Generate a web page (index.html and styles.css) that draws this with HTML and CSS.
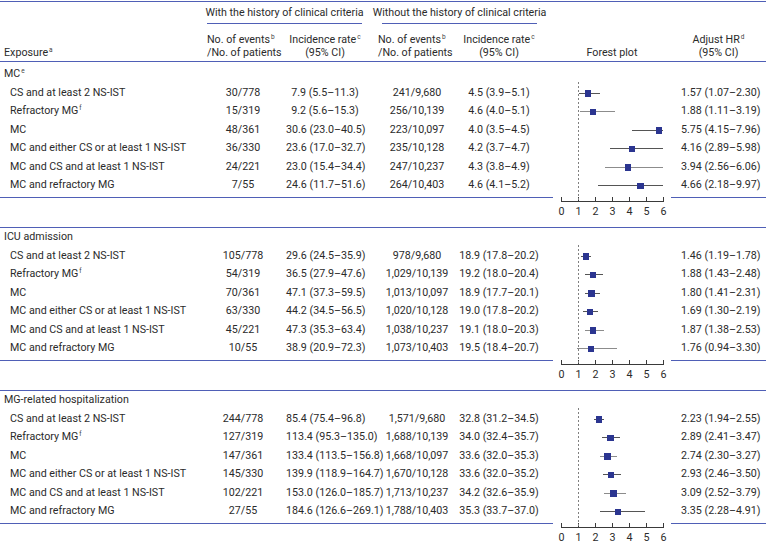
FILE: index.html
```html
<!DOCTYPE html>
<html lang="en">
<head>
<meta charset="utf-8">
<title>Forest plot table</title>
<link rel="stylesheet" href="styles.css">
</head>
<body>
<div class="table">
  <div class="grid hdr-groups">
    <div class="group g1"><span>With the history of clinical criteria</span></div>
    <div class="group g2"><span>Without the history of clinical criteria</span></div>
  </div>
  <div class="grid hdr-cols">
    <div class="c0 hexp">Exposure<sup>a</sup></div>
    <div class="c1 hleft">No. of events<sup>b</sup><br>/No. of patients</div>
    <div class="c2 hcen">Incidence rate<sup>c</sup><br>(95% CI)</div>
    <div class="c3 hleft">No. of events<sup>b</sup><br>/No. of patients</div>
    <div class="c4 hcen">Incidence rate<sup>c</sup><br>(95% CI)</div>
    <div class="c5 hcen">Forest plot</div>
    <div class="c6 hcen">Adjust HR<sup>d</sup><br>(95% CI)</div>
  </div>

  <section class="sec first">
    <div class="grid row"><div class="c0 title">MC<sup>e</sup></div></div>
    <div class="grid row"><div class="c0 lab">CS and at least 2 NS-IST</div><div class="c1">30/778</div><div class="c2">7.9 (5.5–11.3)</div><div class="c3">241/9,680</div><div class="c4">4.5 (3.9–5.1)</div><div class="c5 plot"><i class="ci" style="--lo:1.07;--hi:2.30"></i><b class="pt" style="--est:1.57"></b></div><div class="c6">1.57 (1.07–2.30)</div></div>
    <div class="grid row"><div class="c0 lab">Refractory MG<sup>f</sup></div><div class="c1">15/319</div><div class="c2">9.2 (5.6–15.3)</div><div class="c3">256/10,139</div><div class="c4">4.6 (4.0–5.1)</div><div class="c5 plot"><i class="ci lt" style="--lo:1.11;--hi:3.19"></i><b class="pt" style="--est:1.88"></b></div><div class="c6">1.88 (1.11–3.19)</div></div>
    <div class="grid row"><div class="c0 lab">MC</div><div class="c1">48/361</div><div class="c2">30.6 (23.0–40.5)</div><div class="c3">223/10,097</div><div class="c4">4.0 (3.5–4.5)</div><div class="c5 plot"><i class="ci" style="--lo:4.15;--hi:6"></i><b class="pt" style="--est:5.75"></b></div><div class="c6">5.75 (4.15–7.96)</div></div>
    <div class="grid row"><div class="c0 lab">MC and either CS or at least 1 NS-IST</div><div class="c1">36/330</div><div class="c2">23.6 (17.0–32.7)</div><div class="c3">235/10,128</div><div class="c4">4.2 (3.7–4.7)</div><div class="c5 plot"><i class="ci" style="--lo:2.89;--hi:6"></i><b class="pt" style="--est:4.16"></b></div><div class="c6">4.16 (2.89–5.98)</div></div>
    <div class="grid row"><div class="c0 lab">MC and CS and at least 1 NS-IST</div><div class="c1">24/221</div><div class="c2">23.0 (15.4–34.4)</div><div class="c3">247/10,237</div><div class="c4">4.3 (3.8–4.9)</div><div class="c5 plot"><i class="ci lt" style="--lo:2.56;--hi:6"></i><b class="pt" style="--est:3.94"></b></div><div class="c6">3.94 (2.56–6.06)</div></div>
    <div class="grid row"><div class="c0 lab">MC and refractory MG</div><div class="c1">7/55</div><div class="c2">24.6 (11.7–51.6)</div><div class="c3">264/10,403</div><div class="c4">4.6 (4.1–5.2)</div><div class="c5 plot"><i class="ci" style="--lo:2.18;--hi:6"></i><b class="pt" style="--est:4.66"></b></div><div class="c6">4.66 (2.18–9.97)</div></div>
    <div class="axis-row">
      <div class="rule"></div>
      <div class="axis">
        <svg width="118" height="29" viewBox="0 0 118 29">
          <path d="M8 4.5H111 M8.5 0V4.5 M25.5 0V4.5 M42.5 0V4.5 M59.5 0V4.5 M76.5 0V4.5 M93.5 0V4.5 M110.5 0V4.5" stroke="#3a3a3a" stroke-width="1" fill="none"/>
          <text x="8.5" y="18">0</text><text x="25.5" y="18">1</text><text x="42.5" y="18">2</text><text x="59.5" y="18">3</text><text x="76.5" y="18">4</text><text x="93.5" y="18">5</text><text x="110.5" y="18">6</text>
        </svg>
      </div>
      <div class="rule"></div>
    </div>
  </section>

  <section class="sec">
    <div class="grid row"><div class="c0 title">ICU admission</div></div>
    <div class="grid row"><div class="c0 lab">CS and at least 2 NS-IST</div><div class="c1">105/778</div><div class="c2">29.6 (24.5–35.9)</div><div class="c3">978/9,680</div><div class="c4">18.9 (17.8–20.2)</div><div class="c5 plot"><i class="ci" style="--lo:1.19;--hi:1.78"></i><b class="pt" style="--est:1.46"></b></div><div class="c6">1.46 (1.19–1.78)</div></div>
    <div class="grid row"><div class="c0 lab">Refractory MG<sup>f</sup></div><div class="c1">54/319</div><div class="c2">36.5 (27.9–47.6)</div><div class="c3">1,029/10,139</div><div class="c4">19.2 (18.0–20.4)</div><div class="c5 plot"><i class="ci" style="--lo:1.43;--hi:2.48"></i><b class="pt" style="--est:1.88"></b></div><div class="c6">1.88 (1.43–2.48)</div></div>
    <div class="grid row"><div class="c0 lab">MC</div><div class="c1">70/361</div><div class="c2">47.1 (37.3–59.5)</div><div class="c3">1,013/10,097</div><div class="c4">18.9 (17.7–20.1)</div><div class="c5 plot"><i class="ci" style="--lo:1.41;--hi:2.31"></i><b class="pt" style="--est:1.80"></b></div><div class="c6">1.80 (1.41–2.31)</div></div>
    <div class="grid row"><div class="c0 lab">MC and either CS or at least 1 NS-IST</div><div class="c1">63/330</div><div class="c2">44.2 (34.5–56.5)</div><div class="c3">1,020/10,128</div><div class="c4">19.0 (17.8–20.2)</div><div class="c5 plot"><i class="ci" style="--lo:1.30;--hi:2.19"></i><b class="pt" style="--est:1.69"></b></div><div class="c6">1.69 (1.30–2.19)</div></div>
    <div class="grid row"><div class="c0 lab">MC and CS and at least 1 NS-IST</div><div class="c1">45/221</div><div class="c2">47.3 (35.3–63.4)</div><div class="c3">1,038/10,237</div><div class="c4">19.1 (18.0–20.3)</div><div class="c5 plot"><i class="ci lt" style="--lo:1.38;--hi:2.53"></i><b class="pt" style="--est:1.87"></b></div><div class="c6">1.87 (1.38–2.53)</div></div>
    <div class="grid row"><div class="c0 lab">MC and refractory MG</div><div class="c1">10/55</div><div class="c2">38.9 (20.9–72.3)</div><div class="c3">1,073/10,403</div><div class="c4">19.5 (18.4–20.7)</div><div class="c5 plot"><i class="ci lt" style="--lo:0.94;--hi:3.30"></i><b class="pt" style="--est:1.76"></b></div><div class="c6">1.76 (0.94–3.30)</div></div>
    <div class="axis-row">
      <div class="rule"></div>
      <div class="axis">
        <svg width="118" height="29" viewBox="0 0 118 29">
          <path d="M8 4.5H111 M8.5 0V4.5 M25.5 0V4.5 M42.5 0V4.5 M59.5 0V4.5 M76.5 0V4.5 M93.5 0V4.5 M110.5 0V4.5" stroke="#3a3a3a" stroke-width="1" fill="none"/>
          <text x="8.5" y="18">0</text><text x="25.5" y="18">1</text><text x="42.5" y="18">2</text><text x="59.5" y="18">3</text><text x="76.5" y="18">4</text><text x="93.5" y="18">5</text><text x="110.5" y="18">6</text>
        </svg>
      </div>
      <div class="rule"></div>
    </div>
  </section>

  <section class="sec">
    <div class="grid row"><div class="c0 title">MG-related hospitalization</div></div>
    <div class="grid row"><div class="c0 lab">CS and at least 2 NS-IST</div><div class="c1">244/778</div><div class="c2">85.4 (75.4–96.8)</div><div class="c3">1,571/9,680</div><div class="c4">32.8 (31.2–34.5)</div><div class="c5 plot"><i class="ci" style="--lo:1.94;--hi:2.55"></i><b class="pt" style="--est:2.23"></b></div><div class="c6">2.23 (1.94–2.55)</div></div>
    <div class="grid row"><div class="c0 lab">Refractory MG<sup>f</sup></div><div class="c1">127/319</div><div class="c2">113.4 (95.3–135.0)</div><div class="c3">1,688/10,139</div><div class="c4">34.0 (32.4–35.7)</div><div class="c5 plot"><i class="ci" style="--lo:2.41;--hi:3.47"></i><b class="pt" style="--est:2.89"></b></div><div class="c6">2.89 (2.41–3.47)</div></div>
    <div class="grid row"><div class="c0 lab">MC</div><div class="c1">147/361</div><div class="c2">133.4 (113.5–156.8)</div><div class="c3">1,668/10,097</div><div class="c4">33.6 (32.0–35.3)</div><div class="c5 plot"><i class="ci lt" style="--lo:2.30;--hi:3.27"></i><b class="pt" style="--est:2.74"></b></div><div class="c6">2.74 (2.30–3.27)</div></div>
    <div class="grid row"><div class="c0 lab">MC and either CS or at least 1 NS-IST</div><div class="c1">145/330</div><div class="c2">139.9 (118.9–164.7)</div><div class="c3">1,670/10,128</div><div class="c4">33.6 (32.0–35.2)</div><div class="c5 plot"><i class="ci" style="--lo:2.46;--hi:3.50"></i><b class="pt" style="--est:2.93"></b></div><div class="c6">2.93 (2.46–3.50)</div></div>
    <div class="grid row"><div class="c0 lab">MC and CS and at least 1 NS-IST</div><div class="c1">102/221</div><div class="c2">153.0 (126.0–185.7)</div><div class="c3">1,713/10,237</div><div class="c4">34.2 (32.6–35.9)</div><div class="c5 plot"><i class="ci lt" style="--lo:2.52;--hi:3.79"></i><b class="pt" style="--est:3.09"></b></div><div class="c6">3.09 (2.52–3.79)</div></div>
    <div class="grid row"><div class="c0 lab">MC and refractory MG</div><div class="c1">27/55</div><div class="c2">184.6 (126.6–269.1)</div><div class="c3">1,788/10,403</div><div class="c4">35.3 (33.7–37.0)</div><div class="c5 plot"><i class="ci" style="--lo:2.28;--hi:4.91"></i><b class="pt" style="--est:3.35"></b></div><div class="c6">3.35 (2.28–4.91)</div></div>
    <div class="axis-row">
      <div class="rule"></div>
      <div class="axis">
        <svg width="118" height="29" viewBox="0 0 118 29">
          <path d="M8 4.5H111 M8.5 0V4.5 M25.5 0V4.5 M42.5 0V4.5 M59.5 0V4.5 M76.5 0V4.5 M93.5 0V4.5 M110.5 0V4.5" stroke="#3a3a3a" stroke-width="1" fill="none"/>
          <text x="8.5" y="18">0</text><text x="25.5" y="18">1</text><text x="42.5" y="18">2</text><text x="59.5" y="18">3</text><text x="76.5" y="18">4</text><text x="93.5" y="18">5</text><text x="110.5" y="18">6</text>
        </svg>
      </div>
      <div class="rule"></div>
    </div>
  </section>
</div>
</body>
</html>
```

FILE: styles.css
```css
* { box-sizing: border-box; }
html, body { margin: 0; padding: 0; background: #fff; }
body {
  font-family: Roboto, "Liberation Sans", sans-serif;
  font-size: 10.7px;
  color: #2b2b2b;
  width: 766px;
  overflow: hidden;
}
sup {
  font-size: 6.5px;
  line-height: 0;
  vertical-align: 4px;
  margin-left: 1px;
  color: #444;
}
.table {
  margin-top: 1px;
  border-top: 1px solid #4f5fb6;
}
.grid {
  display: grid;
  grid-template-columns: 200px 86px 78px 92px 86px 129px 95px;
}
.c0 { grid-column: 1; }
.c1 { grid-column: 2; text-align: center; }
.c2 { grid-column: 3; text-align: center; }
.c3 { grid-column: 4; text-align: center; padding-left: 14px; }
.c4 { grid-column: 5; text-align: center; }
.c5 { grid-column: 6; padding-left: 11px; }
.c6 { grid-column: 7; padding-left: 10px; white-space: nowrap; }

/* header */
.hdr-groups { height: 22px; }
.group {
  display: flex;
  justify-content: center;
  align-items: center;
  height: 22px;
  border-bottom: 1px solid #4f5fb6;
  white-space: nowrap;
}
.g1 { grid-column: 2 / 4; margin-left: 7px; margin-right: 2px; }
.g2 { grid-column: 4 / 6; margin-left: 18px; margin-right: 5px; }
.hdr-cols {
  height: 38px;
  border-bottom: 1px solid #4f5fb6;
  align-items: end;
  line-height: 13px;
  padding-bottom: 2px;
}
.hexp { padding-left: 4px; }
.hdr-cols .c1.hleft { text-align: left; padding-left: 7px; }
.hdr-cols .c3.hleft { text-align: left; padding-left: 14px; }
.hdr-cols .hcen { text-align: center; }
.hdr-cols .c6.hcen { padding-left: 0; }

/* sections */
.sec {
  position: relative;
  border-bottom: 1px solid #4f5fb6;
}
.sec.first { padding-top: 3px; }
.sec::before {
  content: "";
  position: absolute;
  left: 578px;
  width: 1px;
  top: 16.5px;
  bottom: 25px;
  background: repeating-linear-gradient(to bottom, #808080 0 2px, transparent 2px 4px);
}
.sec.first::before { top: 19.5px; }
.row {
  height: 18.5px;
  line-height: 18.5px;
  white-space: nowrap;
}
.title { padding-left: 4px; }
.lab { padding-left: 10px; }

.plot { position: relative; }
.ci {
  position: absolute;
  top: 9px;
  height: 1px;
  left: calc(19px + var(--lo) * 17.05px);
  width: calc((var(--hi) - var(--lo)) * 17.05px);
  background: #555;
}
.ci.lt { background: #8c8c8c; }
.pt {
  position: absolute;
  top: 6.5px;
  width: 6.5px;
  height: 6.5px;
  left: calc(19px + var(--est) * 17.05px - 3.25px);
  background: #2b3590;
}

.axis-row {
  display: grid;
  grid-template-columns: 553px 118px 95px;
  margin-top: 2.5px;
  height: 30px;
}
.rule { border-top: 1px solid #4f5fb6; }
.axis svg { display: block; overflow: visible; }
.axis text {
  font-family: Roboto, "Liberation Sans", sans-serif;
  font-size: 10.7px;
  fill: #2b2b2b;
  text-anchor: middle;
}
```
